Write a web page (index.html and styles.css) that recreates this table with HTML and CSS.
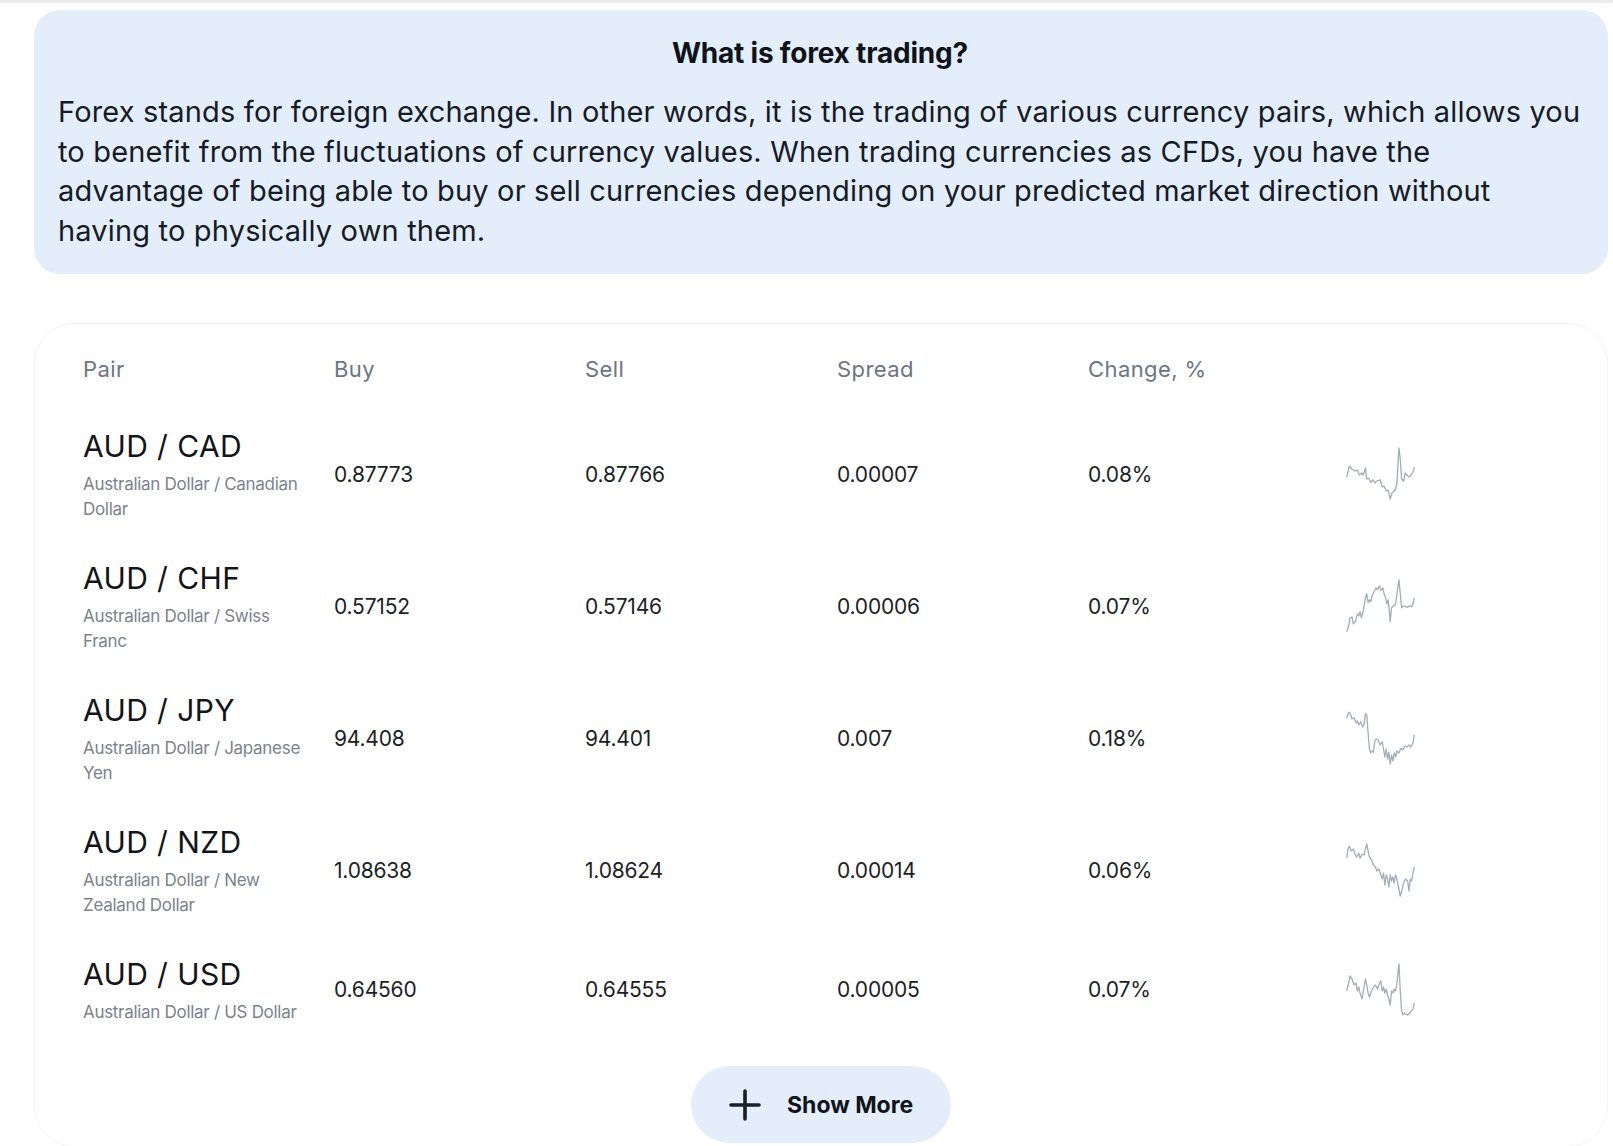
FILE: index.html
```html
<!DOCTYPE html>
<html lang="en">
<head>
<meta charset="utf-8">
<title>What is forex trading?</title>
<link rel="stylesheet" href="styles.css">
</head>
<body>
<div class="topbar"></div>
<main class="page">
  <section class="intro">
    <h2 class="intro-title">What is forex trading?</h2>
    <p class="intro-text">Forex stands for foreign exchange. In other words, it is the trading of various currency pairs, which allows you to benefit from the fluctuations of currency values. When trading currencies as CFDs, you have the advantage of being able to buy or sell currencies depending on your predicted market direction without having to physically own them.</p>
  </section>

  <section class="market">
    <div class="row head">
      <div>Pair</div>
      <div>Buy</div>
      <div>Sell</div>
      <div>Spread</div>
      <div>Change, %</div>
      <div></div>
    </div>

    <div class="row">
      <div class="pair"><div class="name">AUD / CAD</div><div class="desc">Australian Dollar / Canadian Dollar</div></div>
      <div class="num">0.87773</div>
      <div class="num">0.87766</div>
      <div class="num">0.00007</div>
      <div class="num">0.08%</div>
      <div class="spark"><svg width="69" height="54" viewBox="288 70 206 135" preserveAspectRatio="none"><polyline vector-effect="non-scaling-stroke" points="290,145 298,118 305,125 315,130 322,128 328,140 335,135 340,140 346,122 350,150 356,148 362,158 368,152 374,160 380,155 390,152 396,170 402,168 408,180 414,178 420,200 425,185 430,182 436,175 440,160 446,72 450,100 454,150 460,155 465,135 470,140 476,145 482,140 488,132 492,120"/></svg></div>
    </div>

    <div class="row">
      <div class="pair"><div class="name">AUD / CHF</div><div class="desc">Australian Dollar / Swiss Franc</div></div>
      <div class="num">0.57152</div>
      <div class="num">0.57146</div>
      <div class="num">0.00006</div>
      <div class="num">0.07%</div>
      <div class="spark"><svg width="69" height="54" viewBox="288 403 206 135" preserveAspectRatio="none"><polyline vector-effect="non-scaling-stroke" points="290,535 296,520 300,500 306,498 310,515 316,510 322,490 326,495 330,485 334,500 338,488 342,470 346,450 350,440 354,462 358,455 362,460 366,445 372,435 378,425 382,430 388,420 392,432 398,425 402,440 406,450 410,465 414,455 418,490 420,510 424,475 430,470 436,465 440,440 446,405 450,440 454,475 460,470 466,472 472,474 478,470 484,472 488,465 492,450"/></svg></div>
    </div>

    <div class="row">
      <div class="pair"><div class="name">AUD / JPY</div><div class="desc">Australian Dollar / Japanese Yen</div></div>
      <div class="num">94.408</div>
      <div class="num">94.401</div>
      <div class="num">0.007</div>
      <div class="num">0.18%</div>
      <div class="spark"><svg width="69" height="54" viewBox="288 735 206 135" preserveAspectRatio="none"><polyline vector-effect="non-scaling-stroke" points="290,752 296,738 300,740 306,755 312,752 318,765 322,760 326,770 332,762 338,775 342,768 346,742 350,745 354,790 358,830 362,840 366,835 370,838 374,810 378,805 384,808 390,820 396,812 400,830 404,850 408,830 412,855 416,838 420,868 424,845 428,860 432,840 436,850 440,835 446,840 452,828 458,832 464,822 470,825 476,820 482,825 488,815 492,795"/></svg></div>
    </div>

    <div class="row">
      <div class="pair"><div class="name">AUD / NZD</div><div class="desc">Australian Dollar / New Zealand Dollar</div></div>
      <div class="num">1.08638</div>
      <div class="num">1.08624</div>
      <div class="num">0.00014</div>
      <div class="num">0.06%</div>
      <div class="spark"><svg width="69" height="54" viewBox="288 1070 206 135" preserveAspectRatio="none"><polyline vector-effect="non-scaling-stroke" points="290,1108 294,1085 298,1078 304,1090 310,1085 316,1100 320,1105 326,1095 330,1108 336,1098 342,1100 346,1085 350,1072 354,1090 358,1105 364,1112 370,1125 376,1130 380,1140 386,1135 392,1150 396,1160 400,1145 404,1175 408,1150 412,1160 416,1180 420,1150 424,1165 428,1155 432,1170 436,1150 440,1160 446,1185 450,1203 456,1185 460,1170 466,1160 472,1165 476,1190 480,1160 484,1165 488,1145 492,1130"/></svg></div>
    </div>

    <div class="row">
      <div class="pair"><div class="name">AUD / USD</div><div class="desc">Australian Dollar / US Dollar</div></div>
      <div class="num">0.64560</div>
      <div class="num">0.64555</div>
      <div class="num">0.00005</div>
      <div class="num">0.07%</div>
      <div class="spark"><svg width="69" height="54" viewBox="288 1370 206 135" preserveAspectRatio="none"><polyline vector-effect="non-scaling-stroke" points="290,1440 296,1420 300,1402 306,1410 312,1425 318,1420 322,1440 326,1430 330,1445 336,1460 340,1440 346,1410 350,1425 354,1445 358,1455 364,1440 370,1430 376,1425 382,1435 388,1420 392,1415 396,1440 400,1430 404,1445 408,1435 412,1450 416,1460 420,1475 424,1440 428,1445 432,1435 436,1440 440,1420 446,1372 450,1440 454,1490 458,1500 462,1495 466,1498 472,1500 478,1495 484,1490 488,1485 492,1470"/></svg></div>
    </div>

    <div class="more-wrap">
      <button class="more" type="button">
        <svg class="more-icon" width="32" height="32" viewBox="0 0 32 32"><path d="M16 2v28M2 16h28"/></svg>
        <span>Show More</span>
      </button>
    </div>
  </section>
</main>
</body>
</html>
```

FILE: styles.css
```css
* { box-sizing: border-box; }

body {
  margin: 0;
  background: #ffffff;
  font-family: Inter, "Noto Sans", "Liberation Sans", sans-serif;
  color: #141a22;
}

.topbar {
  height: 3px;
  background: #ececec;
  box-shadow: 0 6px 26px rgba(0, 0, 0, 0.05);
}

.page {
  padding: 7px 5px 0 34px;
}

.intro {
  background: #e4edfa;
  border-radius: 26px;
  padding: 25px 26px 24px 24px;
}

.intro-title {
  margin: 0;
  text-align: center;
  font-size: 28px;
  line-height: 36px;
  font-weight: 700;
  letter-spacing: -0.2px;
  color: #0e131a;
}

.intro-text {
  margin: 21px 0 0;
  font-size: 29px;
  line-height: 39.6px;
  font-weight: 400;
  letter-spacing: 0.17px;
  color: #151b26;
}

.market {
  margin-top: 49px;
  border: 1px solid #f3f3f3;
  border-radius: 40px;
  padding: 31px 48px 3px 48px;
}

.row {
  display: grid;
  grid-template-columns: 251px 251px 252px 251px 258px 69px;
  align-items: center;
  padding: 18px 0;
}

.row.head {
  padding: 0;
  margin-bottom: 25px;
  font-size: 22px;
  line-height: 28px;
  letter-spacing: 0.4px;
  color: #6b7682;
}

.name {
  font-size: 30px;
  line-height: 40px;
  letter-spacing: 0.4px;
  margin-bottom: 6px;
  color: #111419;
}

.desc {
  font-size: 17px;
  line-height: 25px;
  letter-spacing: -0.3px;
  color: #7a838d;
  max-width: 222px;
}

.num {
  font-size: 21px;
  letter-spacing: -0.2px;
  color: #1b1f25;
}

.spark svg {
  display: block;
  fill: none;
  stroke: #a3acb7;
  stroke-width: 1.3;
  stroke-linejoin: round;
}

.more-wrap {
  display: flex;
  justify-content: center;
  margin-top: 23px;
}

.more {
  display: flex;
  align-items: center;
  gap: 26px;
  width: 260px;
  height: 77px;
  padding: 0 0 0 38px;
  border: 0;
  border-radius: 40px;
  background: #e4edfa;
  font-family: Inter, "Noto Sans", sans-serif;
  font-size: 23px;
  font-weight: 700;
  letter-spacing: 0;
  color: #0f141b;
}

.more-icon {
  display: block;
  fill: none;
  stroke: #1a1f28;
  stroke-width: 3.6;
  stroke-linecap: round;
}
```
